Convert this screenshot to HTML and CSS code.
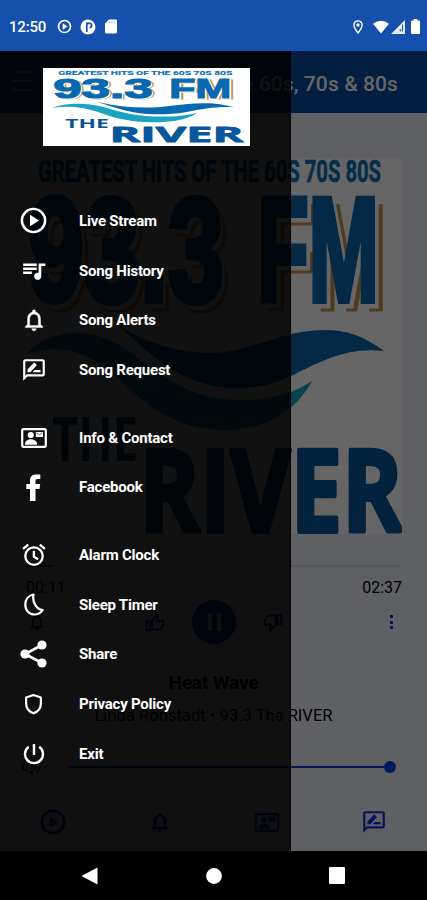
FILE: index.html
```html
<!DOCTYPE html>
<html lang="en">
<head>
<meta charset="utf-8">
<title>93.3 The River</title>
<link rel="stylesheet" href="styles.css">
</head>
<body>
<svg class="defs" aria-hidden="true">
  <defs>
    <symbol id="logo" viewBox="0 0 408 408" preserveAspectRatio="none">
      <rect width="408" height="408" fill="#fff"/>
      <g font-family="Roboto, sans-serif" font-weight="700">
        <text x="30" y="35.500" font-size="31" fill="#0870b8" stroke="#0870b8" stroke-width=".7" textLength="343" lengthAdjust="spacingAndGlyphs">GREATEST HITS OF THE 60S 70S 80S</text>
      </g>
      <g font-family="Liberation Sans, sans-serif" font-weight="700" font-size="148">
        <g fill="#c9924a" stroke="#c9924a" stroke-width="5"><text x="26" y="163" textLength="196" lengthAdjust="spacingAndGlyphs">93.3</text><text x="257" y="163" textLength="122" lengthAdjust="spacingAndGlyphs">FM</text></g>
        <g fill="#fff" stroke="#fff" stroke-width="5"><text x="23" y="160" textLength="196" lengthAdjust="spacingAndGlyphs">93.3</text><text x="253" y="160" textLength="122" lengthAdjust="spacingAndGlyphs">FM</text></g>
        <g fill="#0868b0" stroke="#0868b0" stroke-width="6"><text x="20" y="155" textLength="196" lengthAdjust="spacingAndGlyphs">93.3</text><text x="249" y="155" textLength="122" lengthAdjust="spacingAndGlyphs">FM</text></g>
      </g>
      <path d="M17 209C45 180 88 179 125 208C160 236 190 254 232 254C260 254 285 248 304 235C285 270 252 284 217 284C170 284 140 262 110 232C82 206 52 196 17 209Z" fill="#1ba3c4"/>
      <path d="M108 178C140 198 170 207 202 207C245 207 270 184 317 184C345 184 362 195 376 205C340 201 315 214 283 230C262 240 245 242 228 242C175 242 145 210 108 178Z" fill="#0868b0"/>
      <g font-family="Open Sans, sans-serif" font-weight="700">
        <text x="44" y="315" font-size="60" fill="#0a5295" textLength="86" lengthAdjust="spacingAndGlyphs">THE</text>
        <text x="131" y="386" font-size="114" fill="#08569c" stroke="#08569c" stroke-width="4" stroke-linejoin="round" textLength="264" lengthAdjust="spacingAndGlyphs">RIVER</text>
      </g>
    </symbol>
    <symbol id="play" viewBox="0 0 24 24"><circle cx="12" cy="12" r="9" fill="none" stroke="currentColor" stroke-width="1.900"/><path d="M9.300 7.600v8.800l7-4.400z" fill="currentColor"/></symbol>
    <symbol id="bell" viewBox="0 0 24 24"><path fill="currentColor" stroke="currentColor" stroke-width=".4" d="M12 22c1.100 0 2-.9 2-2h-4c0 1.100.9 2 2 2zm6-6v-5c0-3.070-1.630-5.640-4.500-6.320V4c0-.83-.67-1.500-1.500-1.500s-1.500.67-1.500 1.500v.68C7.640 5.360 6 7.920 6 11v5l-2 2v1h16v-1l-2-2zm-2 1H8v-6c0-2.480 1.510-4.500 4-4.500s4 2.020 4 4.500v6z"/></symbol>
    <symbol id="review" viewBox="0 0 24 24"><path fill="currentColor" d="M20 2H4c-1.100 0-2 .9-2 2v18l4-4h14c1.100 0 2-.9 2-2V4c0-1.100-.9-2-2-2zm0 14H5.200L4 17.200V4h16v12zM10.500 14H18v-2h-5.500zM14.360 7.870c.2-.2.2-.51 0-.71l-1.770-1.770c-.2-.2-.51-.2-.71 0L6 11.530V14h2.470z"/></symbol>
    <symbol id="contact" viewBox="0 0 26 20"><rect x="1.200" y="1.200" width="23.600" height="17.600" rx="1.500" fill="none" stroke="currentColor" stroke-width="2.200"/><circle cx="9.800" cy="7" r="3.100" fill="currentColor"/><path fill="currentColor" d="M4 15.700c0-3 3.500-4.500 6-4.500s6 1.500 6 4.500v1H4zM14.800 4h7.200v5h-7.200z"/><path d="M15.500 4.800l2.900 2 2.900-2" fill="none" stroke="#333" stroke-width=".7"/></symbol>
  </defs>
</svg>

<div class="phone">
  <header class="status">
    <span class="clock">12:50</span>
    <svg class="s-play" viewBox="0 0 15 15"><circle cx="7.500" cy="7.500" r="6" fill="none" stroke="#fff" stroke-width="1.700"/><path d="M5.600 4.200v6.600l5-3.300z" fill="#fff"/></svg>
    <svg class="s-app" viewBox="0 0 16 16"><circle cx="8" cy="8" r="7.500" fill="#fff"/><path d="M6.800 3.500v9.500M7 4.300h2.500a1.800 1.800 0 0 1 0 4.200" fill="none" stroke="#1551ac" stroke-width="1.700"/></svg>
    <svg class="s-card" viewBox="0 0 12 15"><path d="M4 .5h6.500A1.300 1.300 0 0 1 12 2v11a1.500 1.500 0 0 1-1.500 1.500h-9A1.500 1.500 0 0 1 0 13V4.500z" fill="#fff"/><path d="M4.500 2v2M6.900 2v2M9.300 2v2" stroke="#8fb0de" stroke-width=".8"/></svg>
    <span class="grow"></span>
    <svg class="s-pin" viewBox="0 0 10 14"><path d="M5 13C2.500 9.800.9 7.300.9 5a4.100 4.100 0 0 1 8.200 0c0 2.300-1.600 4.800-4.100 8z" fill="none" stroke="#fff" stroke-width="1.400"/><circle cx="5" cy="5" r="1.700" fill="#fff"/></svg>
    <svg class="s-wifi" viewBox="0 0 17 14"><path d="M0 3.500Q8.500-3 17 3.500L8.500 14z" fill="#fff"/></svg>
    <svg class="s-cell" viewBox="0 0 14 14"><path d="M14 0v14H0z" fill="#fff" opacity=".88"/><path d="M11.500 4.500v7M9.300 9v2.500" stroke="#1551ac" stroke-width="1"/></svg>
    <svg class="s-batt" viewBox="0 0 9 15"><path d="M2.700 0h3.600v1.500H8a1 1 0 0 1 1 1V14a1 1 0 0 1-1 1H1a1 1 0 0 1-1-1V2.500a1 1 0 0 1 1-1h1.700z" fill="#fff"/></svg>
  </header>

  <div class="stage">
    <main class="player">
      <div class="appbar"><span class="burger"><i></i><i></i><i></i></span><h1>Greatest Hits of the 60s, 70s &amp; 80s</h1></div>
      <svg class="cover" viewBox="18 12 376 376"><use href="#logo" width="408" height="408"/></svg>
      <div class="progress"><i></i></div>
      <div class="times"><span>00:11</span><span>02:37</span></div>
      <div class="controls">
        <svg width="20" height="20"><use href="#bell"/></svg>
        <svg width="21" height="21" viewBox="0 0 24 24"><path d="M2 10h4v11H2zM8 20V10l6-7 1 1-1 6h7v3l-3 7z" fill="none" stroke="currentColor" stroke-width="2"/></svg>
        <span class="pause"><i></i><i></i></span>
        <svg width="21" height="21" viewBox="0 0 24 24"><path d="M22 14h-4V3h4zM16 4v10l-6 7-1-1 1-6H3v-3l3-7z" fill="none" stroke="currentColor" stroke-width="2"/></svg>
        <span class="more"><i></i><i></i><i></i></span>
      </div>
      <h2>Heat Wave</h2>
      <p class="artist">Linda Ronstadt • 93.3 The RIVER</p>
      <div class="volume">
        <svg width="22" height="18" viewBox="0 0 22 20"><path d="M1 7h4l6-5v16l-6-5H1zM14 6q3 4 0 8M17 3q5 7 0 14" fill="none" stroke="currentColor" stroke-width="1.800"/></svg>
        <span class="track"></span><b></b>
      </div>
      <nav class="tabs">
        <svg width="30" height="30"><use href="#play"/></svg>
        <svg width="24" height="24"><use href="#bell"/></svg>
        <svg width="26" height="19"><use href="#contact"/></svg>
        <svg width="26" height="26"><use href="#review"/></svg>
      </nav>
    </main>
    <div class="scrim"></div>
    <aside class="drawer">
      <svg class="brand"><use href="#logo" width="207" height="78"/></svg>
      <ul>
        <li><span><svg width="31" height="31"><use href="#play"/></svg></span>Live Stream</li>
        <li><span><svg width="26" height="26" viewBox="0 0 24 24"><path fill="currentColor" d="M14.500 5H2v2.400h12.500zM14.500 8.700H2v2.400h12.500zM2 14.800h8v-2.400H2zM16.300 5v8.700a3.300 3.300 0 1 0 2.400 3.100V7.400H22.500V5z"/></svg></span>Song History</li>
        <li><span><svg width="26" height="26"><use href="#bell"/></svg></span>Song Alerts</li>
        <li><span><svg width="26" height="26"><use href="#review"/></svg></span>Song Request</li>
      </ul>
      <ul>
        <li><span><svg width="26" height="20"><use href="#contact"/></svg></span>Info &amp; Contact</li>
        <li><span><svg width="15" height="27" viewBox="0 0 15 27"><path fill="currentColor" d="M4 27V15H.3v-5H4V6.500C4 2.500 6.500.5 10 .5h4.300V5h-2.600c-1.800 0-2.200.8-2.200 2.200V10h4.700l-.7 5h-4v12z"/></svg></span>Facebook</li>
      </ul>
      <ul>
        <li><span><svg width="24" height="24" viewBox="1 1 22 22"><g fill="none" stroke="currentColor" stroke-width="2.100"><circle cx="12" cy="13" r="8"/><path d="M2 6.300L6.700 2.400M22 6.300l-4.700-3.900M11.900 8v5.400l3.800 2.600"/></g></svg></span>Alarm Clock</li>
        <li><span><svg width="20" height="23" viewBox="0 0 20 23"><path d="M9.500 1.500C4.500 2.500 1.300 6.500 1.300 11.500c0 6 4 10 9 10 3.500 0 6.500-1.500 8.300-4.500C12.500 16.500 8 9 9.500 1.500z" fill="none" stroke="currentColor" stroke-width="2.200" stroke-linejoin="round"/></svg></span>Sleep Timer</li>
        <li><span><svg width="27" height="28" viewBox="0 0 27 28"><path d="M22 5L5 14l17 9" fill="none" stroke="currentColor" stroke-width="2.600"/><g fill="currentColor"><circle cx="22" cy="5" r="4.600"/><circle cx="5" cy="14" r="4.600"/><circle cx="22" cy="23" r="4.600"/></g></svg></span>Share</li>
        <li><span><svg width="19" height="22" viewBox="0 0 20 23"><path d="M10 2L2.200 4.600v6.200C2.200 16 5.500 19.800 10 21.300c4.500-1.500 7.800-5.300 7.800-10.500V4.600z" fill="none" stroke="currentColor" stroke-width="2.300" stroke-linejoin="round"/></svg></span>Privacy Policy</li>
        <li><span><svg width="22" height="22" viewBox="0 0 22 22"><path d="M11 1v11M5.800 3.800a9 9 0 1 0 10.400 0" fill="none" stroke="currentColor" stroke-width="2.400"/></svg></span>Exit</li>
      </ul>
    </aside>
  </div>

  <footer class="navbar">
    <svg width="17" height="18" viewBox="0 0 17 18"><path d="M16.500.5v17L.5 9z" fill="#fff"/></svg>
    <svg width="16" height="16"><circle cx="8" cy="8" r="7.900" fill="#fff"/></svg>
    <svg width="16" height="17"><rect width="16" height="17" rx="1" fill="#fff"/></svg>
  </footer>
</div>
</body>
</html>
```
FILE: styles.css
```css
* { box-sizing: border-box; }
body { margin: 0; font-family: Roboto, sans-serif; }
h1, h2, p, ul { margin: 0; padding: 0; }
svg { display: block; flex: none; }
.defs { position: absolute; width: 0; height: 0; }
.phone { width: 427px; height: 900px; display: flex; flex-direction: column; overflow: hidden; background: #000; }

.status { height: 51px; flex: none; background: #1551ac; color: #fff; display: flex; align-items: center; padding: 2px 7px 0 9px; }
.clock { font-size: 15px; font-weight: 500; width: 48px; letter-spacing: -.2px; }
.s-play { width: 15px; height: 15px; margin-right: 8px; }
.s-app { width: 16px; height: 16px; margin-right: 9px; }
.s-card { width: 12px; height: 15px; }
.grow { flex: 1; }
.s-pin { width: 10px; height: 14px; margin-right: 10px; }
.s-wifi { width: 16px; height: 14px; margin-right: 2px; }
.s-cell { width: 14px; height: 14px; margin-right: 6px; }
.s-batt { width: 9px; height: 15px; }

.stage { position: relative; height: 800px; flex: none; }
.player { height: 800px; background: #ebeff8; color: #000; display: flex; flex-direction: column; }
.appbar { height: 62px; flex: none; background: #0a4ba5; display: flex; align-items: center; justify-content: space-between; padding: 3px 29px 0 12px; }
.burger { display: flex; flex-direction: column; gap: 7px; width: 21px; margin-top: -6px; }
.burger i { height: 2px; background: #aaa; }
.appbar h1 { color: #fff; font-size: 21px; font-weight: 500; letter-spacing: .1px; white-space: nowrap; }
.cover { width: 376px; height: 376px; margin: 45px 0 0 26px; border-radius: 3px; }
.progress { height: 2px; margin: 31px 27px 0 26px; background: #d6dae3; }
.progress i { display: block; width: 27px; height: 2px; background: #0b3fd0; }
.times { display: flex; justify-content: space-between; padding: 0 25px 0 26px; margin-top: 11px; font-size: 16px; line-height: 19px; }
.controls { height: 44px; margin-top: 3px; padding: 0 7px 0 8px; display: grid; grid-template-columns: 57px 1fr 44px 1fr 57px; align-items: center; justify-items: center; color: #0a22c0; }
.controls svg:nth-of-type(2) { margin-left: 54px; }
.controls svg:nth-of-type(3) { margin-right: 54px; }
.pause { width: 44px; height: 44px; border-radius: 50%; background: #0a3fcf; display: flex; gap: 5px; align-items: center; justify-content: center; }
.pause i { width: 4px; height: 18px; background: #dde; }
.more { display: flex; flex-direction: column; gap: 2.500px; width: 8px; align-items: center; }
.more i { width: 3px; height: 3px; background: #0a18f0; border-radius: 1px; }
.player h2 { margin-top: 27px; text-align: center; font-size: 19px; line-height: 23px; font-weight: 700; letter-spacing: -.1px; }
.artist { margin-top: 12px; text-align: center; font-size: 16.600px; line-height: 20px; }
.volume { display: flex; align-items: center; height: 20px; margin-top: 31px; padding: 0 31px 0 21px; color: #0a32c0; }
.track { flex: 1; height: 2px; margin-left: 26px; background: #0b3fcf; }
.volume b { width: 12px; height: 12px; border-radius: 50%; background: #0b3fe8; }
.tabs { display: grid; grid-template-columns: repeat(4, 1fr); justify-items: center; align-items: center; height: 56px; margin-top: 17px; color: #0b32e0; }
.scrim { position: absolute; inset: 0; background: rgba(0, 0, 0, .6); }

.drawer { position: absolute; left: 0; top: 0; width: 291px; height: 800px; background: rgba(0, 0, 0, .83); color: #fff; padding-top: 17px; border-right: 1px solid #000; }
.brand { width: 207px; height: 78px; margin: 0 0 50px 43px; }
.drawer ul { list-style: none; margin-bottom: 18px; }
.drawer li { height: 49.700px; display: flex; align-items: center; font-size: 15px; font-weight: 700; letter-spacing: -.22px; }
.drawer li span { width: 67px; margin-right: 12px; display: flex; justify-content: center; }

.navbar { height: 49px; flex: none; background: #000; display: flex; align-items: center; justify-content: space-between; padding: 0 82px 0 81px; }
```
